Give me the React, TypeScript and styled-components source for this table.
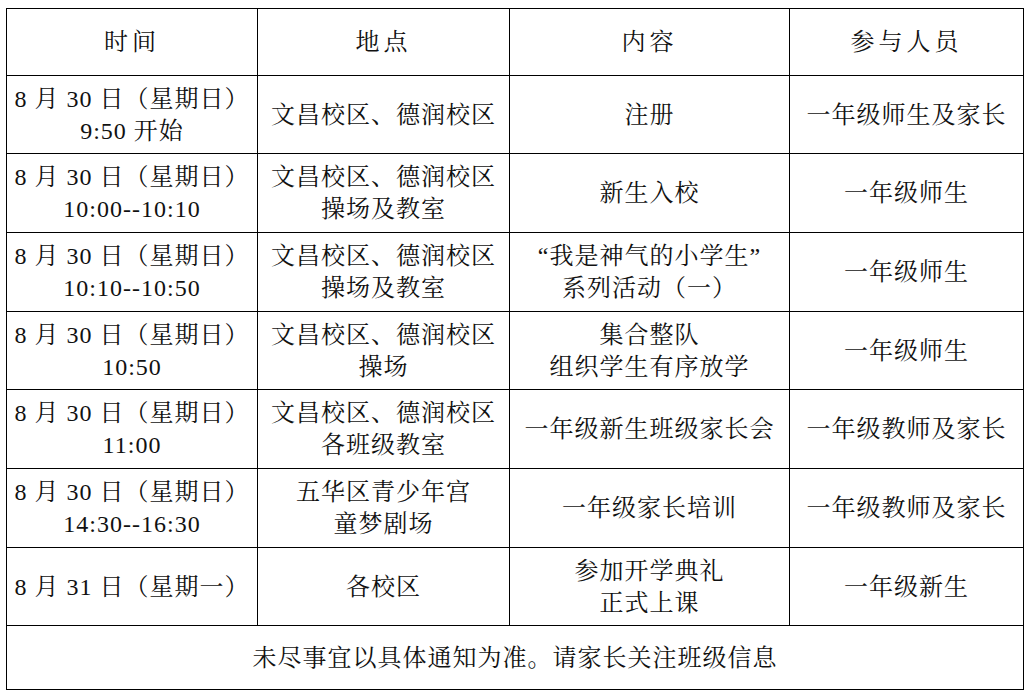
import React from "react";
import styled, { createGlobalStyle } from "styled-components";

const GlobalStyle = createGlobalStyle`
  html, body {
    margin: 0;
    padding: 0;
    background: #ffffff;
  }
  body {
    font-family: "Liberation Serif", "Noto Serif CJK SC", "Noto Sans CJK SC", serif;
    color: #111111;
  }
`;

const Page = styled.div`
  padding: 8px 0 0 6px;
`;

const Table = styled.table`
  width: 1017px;
  table-layout: fixed;
  border-collapse: collapse;
  font-size: 24px;
  line-height: 32px;
`;

const Row = styled.tr<{ $height: number }>`
  height: ${(p) => p.$height}px;
`;

const Cell = styled.td`
  border: 1px solid #000000;
  padding: 0;
  text-align: center;
  vertical-align: middle;
  letter-spacing: 1px;
  white-space: nowrap;
`;

const HeadCell = styled.th`
  border: 1px solid #000000;
  padding: 0;
  font-weight: normal;
  text-align: center;
  vertical-align: middle;
  letter-spacing: 4px;
`;

const Line = styled.div`
  display: block;
  height: 32px;
  line-height: 32px;
`;

type RowData = {
  height: number;
  cells: string[][];
};

const columns = [251, 252, 280, 234];
const headers = ["时间", "地点", "内容", "参与人员"];

const rows: RowData[] = [
  {
    height: 78,
    cells: [
      ["8 月 30 日（星期日）", "9:50 开始"],
      ["文昌校区、德润校区"],
      ["注册"],
      ["一年级师生及家长"],
    ],
  },
  {
    height: 79,
    cells: [
      ["8 月 30 日（星期日）", "10:00--10:10"],
      ["文昌校区、德润校区", "操场及教室"],
      ["新生入校"],
      ["一年级师生"],
    ],
  },
  {
    height: 79,
    cells: [
      ["8 月 30 日（星期日）", "10:10--10:50"],
      ["文昌校区、德润校区", "操场及教室"],
      ["“我是神气的小学生”", "系列活动（一）"],
      ["一年级师生"],
    ],
  },
  {
    height: 78,
    cells: [
      ["8 月 30 日（星期日）", "10:50"],
      ["文昌校区、德润校区", "操场"],
      ["集合整队", "组织学生有序放学"],
      ["一年级师生"],
    ],
  },
  {
    height: 79,
    cells: [
      ["8 月 30 日（星期日）", "11:00"],
      ["文昌校区、德润校区", "各班级教室"],
      ["一年级新生班级家长会"],
      ["一年级教师及家长"],
    ],
  },
  {
    height: 79,
    cells: [
      ["8 月 30 日（星期日）", "14:30--16:30"],
      ["五华区青少年宫", "童梦剧场"],
      ["一年级家长培训"],
      ["一年级教师及家长"],
    ],
  },
  {
    height: 78,
    cells: [
      ["8 月 31 日（星期一）"],
      ["各校区"],
      ["参加开学典礼", "正式上课"],
      ["一年级新生"],
    ],
  },
];

const App: React.FC = () => {
  return (
    <>
      <GlobalStyle />
      <Page>
        <Table>
          <colgroup>
            {columns.map((w, i) => (
              <col key={i} style={{ width: w }} />
            ))}
          </colgroup>
          <thead>
            <Row $height={67}>
              {headers.map((h) => (
                <HeadCell key={h}>{h}</HeadCell>
              ))}
            </Row>
          </thead>
          <tbody>
            {rows.map((row, r) => (
              <Row key={r} $height={row.height}>
                {row.cells.map((lines, c) => (
                  <Cell key={c}>
                    {lines.map((text, l) => (
                      <Line key={l}>{text}</Line>
                    ))}
                  </Cell>
                ))}
              </Row>
            ))}
            <Row $height={64}>
              <Cell colSpan={4}>
                未尽事宜以具体通知为准。请家长关注班级信息
              </Cell>
            </Row>
          </tbody>
        </Table>
      </Page>
    </>
  );
};

export default App;
